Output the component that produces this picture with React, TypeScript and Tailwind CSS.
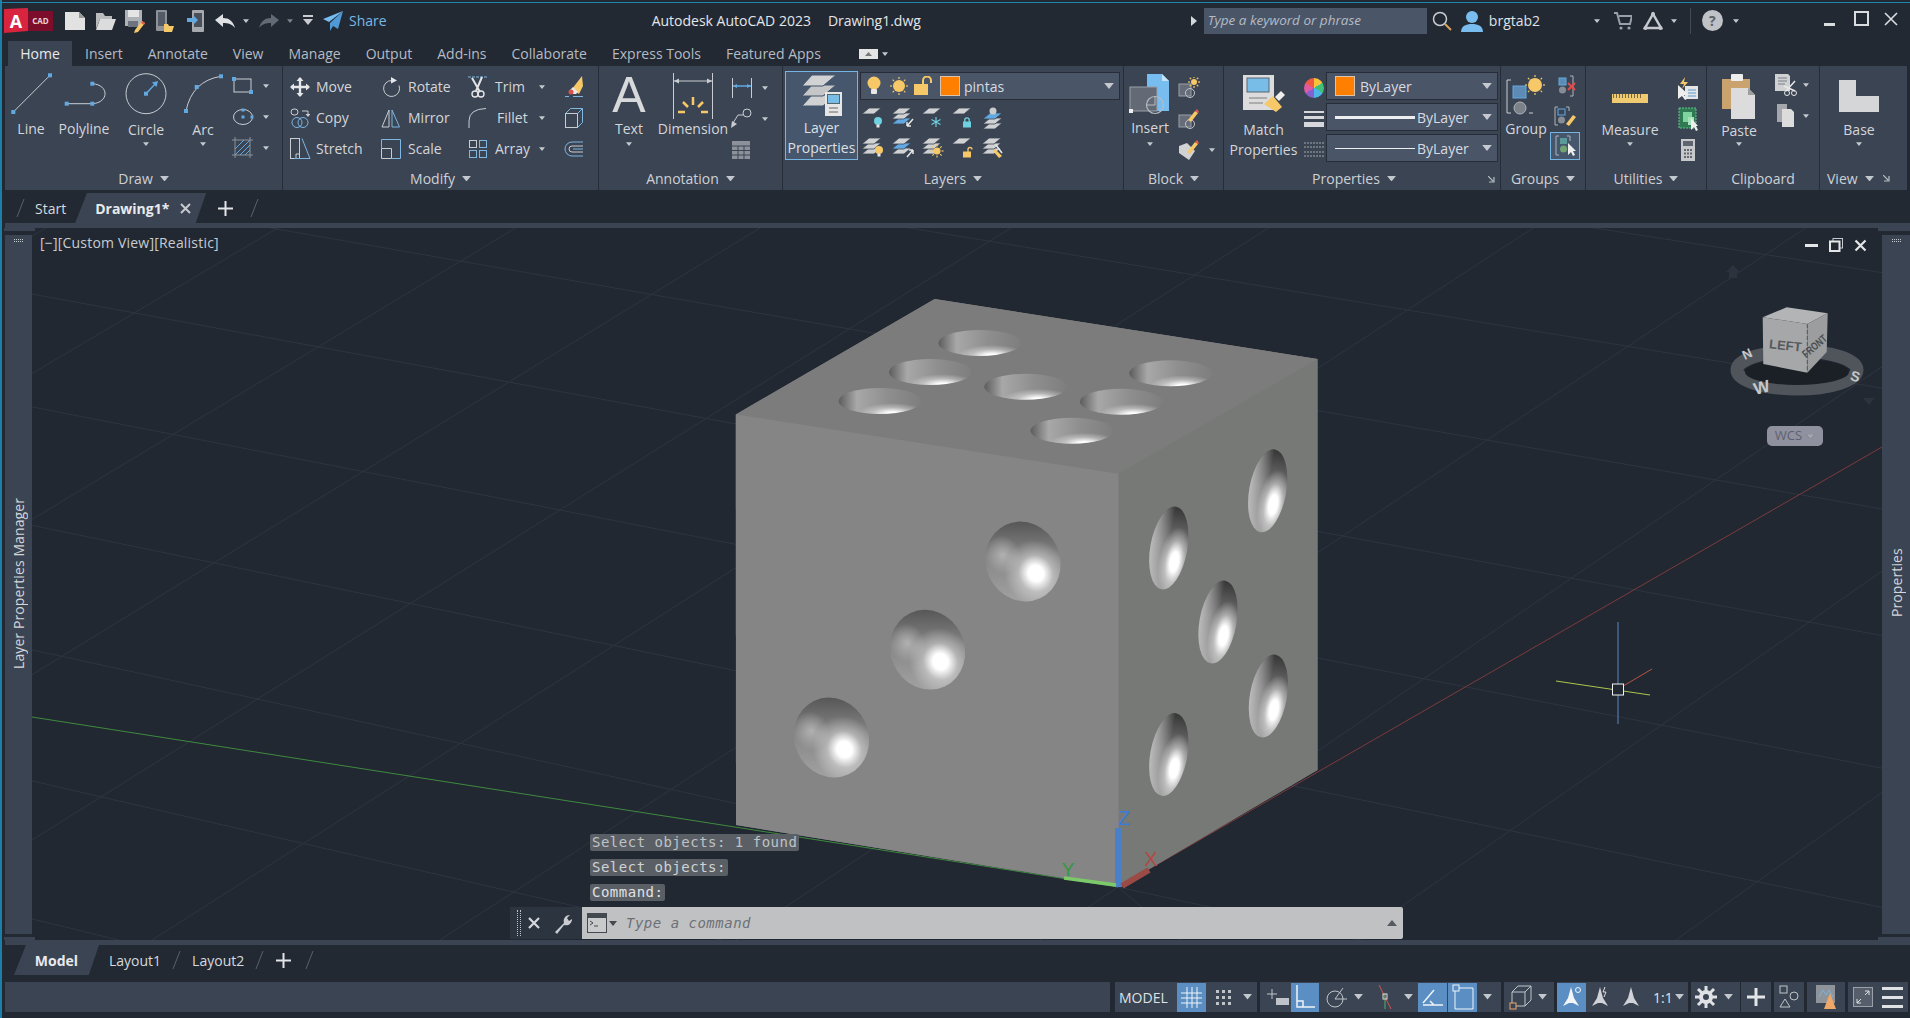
import type { ReactNode } from "react";

const BLUE = "#62a9e2";
const GREY = "#c9cdd2";
const YEL = "#f6c868";

function Ico({ w = 20, h = 20, children, className = "" }: { w?: number; h?: number; children: ReactNode; className?: string }) {
  return (
    <svg width={w} height={h} viewBox={`0 0 ${w} ${h}`} fill="none" className={`shrink-0 ${className}`}>
      {children}
    </svg>
  );
}

function Caret({ size = 8, color = "#c3c8ce" }: { size?: number; color?: string }) {
  return (
    <svg width={size} height={size / 2 + 1} viewBox="0 0 8 5" className="shrink-0">
      <path d="M0 0h8L4 5z" fill={color} />
    </svg>
  );
}

function Pt({ x, y, s = 4 }: { x: number; y: number; s?: number }) {
  return <rect x={x - s / 2} y={y - s / 2} width={s} height={s} fill={BLUE} />;
}

/* ---------- title bar ---------- */

function Logo() {
  return (
    <div className="flex h-[23px] items-center">
      <div className="flex h-[25px] w-[24px] items-center justify-center bg-[#d8243f] text-[18px] font-bold leading-none text-white [clip-path:polygon(0_4%,100%_0,100%_92%,0_100%)]">
        A
      </div>
      <div className="flex h-[20px] w-[25px] items-center justify-center bg-[#7c0d2b] text-[8px] font-bold text-[#e9d4da]">
        CAD
      </div>
    </div>
  );
}

const QatNew = () => (
  <Ico w={20} h={20}>
    <path d="M0 1h14l6 6v12H0z" fill="#e2e2e2" />
    <path d="M14 1v6h6z" fill="#9a9a9a" />
  </Ico>
);
const QatOpen = () => (
  <Ico w={21} h={20}>
    <path d="M1 5V2h7l2 3h7v3H5L1 18z" fill="#b9bbbd" />
    <path d="M5 8h16l-4 11H1z" fill="#dcdcdc" />
  </Ico>
);
const QatSave = () => (
  <Ico w={20} h={24}>
    <path d="M0 1h17v16H0z" fill="#aeb1b5" />
    <rect x="3" y="1" width="11" height="7" fill="#e5e5e5" />
    <rect x="3" y="12" width="10" height="6" fill="#6d7480" />
    <path d="M10 21l7-9 3 2-7 9-4 1z" fill={YEL} />
    <path d="M17 12l3 2-1 2-3-2z" fill="#e25a4a" />
  </Ico>
);
const QatPhoneOpen = () => (
  <Ico w={19} h={24}>
    <rect x="1" y="1" width="11" height="21" rx="1" fill="#8e9298" />
    <rect x="3" y="3" width="7" height="14" fill="#545b66" />
    <path d="M9 15h4l1 2h5l-2 6H9z" fill={YEL} />
  </Ico>
);
const QatPhoneSave = () => (
  <Ico w={18} h={24}>
    <rect x="5" y="1" width="12" height="22" rx="1" fill="#a6a9ad" />
    <rect x="7" y="4" width="8" height="14" fill="#4a505a" />
    <path d="M0 9h6V6l5 5-5 5v-3H0z" fill={BLUE} />
  </Ico>
);
const UndoIco = ({ color }: { color: string }) => (
  <Ico w={20} h={16}>
    <path d="M0 7l8-6v4c6 0 10 3 12 10-3-4-7-5-12-5v4z" fill={color} />
  </Ico>
);
const RedoIco = ({ color }: { color: string }) => (
  <Ico w={20} h={16}>
    <path d="M20 7l-8-6v4C6 5 2 8 0 15c3-4 7-5 12-5v4z" fill={color} />
  </Ico>
);
const QatMenu = () => (
  <Ico w={10} h={11}>
    <rect y="0" width="10" height="2" fill="#c8ccd1" />
    <path d="M0 4h10L5 10z" fill="#c8ccd1" />
  </Ico>
);
const Plane = () => (
  <Ico w={20} h={20}>
    <path d="M20 0L0 8l6 3z" fill="#79bdf0" />
    <path d="M20 0L7 12v8l3-5 5 3z" fill="#4f9ad6" />
  </Ico>
);

function TitleBar() {
  return (
    <div className="flex h-[38px] items-center pb-[3px] pl-[2px]">
      <Logo />
      <div className="ml-[12px] flex w-[30px] justify-start"><QatNew /></div>
      <div className="flex w-[30px]"><QatOpen /></div>
      <div className="flex w-[30px]"><QatSave /></div>
      <div className="flex w-[32px]"><QatPhoneOpen /></div>
      <div className="flex w-[28px]"><QatPhoneSave /></div>
      <UndoIco color="#dfe1e4" />
      <div className="ml-[8px]"><Caret size={6} /></div>
      <div className="ml-[10px]"><RedoIco color="#626a76" /></div>
      <div className="ml-[8px]"><Caret size={6} color="#7b838e" /></div>
      <div className="ml-[10px]"><QatMenu /></div>
      <div className="ml-[10px]"><Plane /></div>
      <span className="ml-[6px] text-[14px] text-[#79b8e6]">Share</span>
      <span className="ml-[265px] text-[14px] text-[#e3e6ea]">Autodesk AutoCAD 2023</span>
      <span className="ml-[17px] text-[14px] text-[#e3e6ea]">Drawing1.dwg</span>
      <svg width="6" height="10" viewBox="0 0 6 10" className="ml-[270px] shrink-0"><path d="M0 0l6 5-6 5z" fill="#d5d8dc" /></svg>
      <div className="ml-[7px] flex h-[26px] w-[223px] items-center bg-[#4a5567] pl-[4px] text-[13.5px] italic text-[#b4bbc5]">
        Type a keyword or phrase
      </div>
      <Ico w={20} h={20} className="ml-[5px]">
        <circle cx="8" cy="8" r="6.5" stroke="#c9cdd2" strokeWidth="1.5" />
        <path d="M13 13l6 6" stroke="#d9a45a" strokeWidth="2" />
      </Ico>
      <Ico w={22} h={22} className="ml-[9px]">
        <circle cx="11" cy="7" r="6" fill="#79bdf0" />
        <path d="M0 22c0-6 5-8 11-8s11 2 11 8z" fill="#79bdf0" />
      </Ico>
      <span className="ml-[6px] w-[105px] text-[14px] text-[#dfe2e6]">brgtab2</span>
      <Caret size={6} />
      <Ico w={18} h={20} className="ml-[14px]">
        <path d="M0 2h3l3 11h10l2-8H5" stroke="#9aa0a8" strokeWidth="2" />
        <circle cx="7" cy="17" r="1.6" fill="#9aa0a8" />
        <circle cx="15" cy="17" r="1.6" fill="#9aa0a8" />
      </Ico>
      <Ico w={20} h={20} className="ml-[11px]">
        <path d="M10 3L2 17h16z" stroke="#c5c9ce" strokeWidth="2.5" />
        <circle cx="10" cy="3" r="2" fill="#c5c9ce" />
        <circle cx="2.5" cy="17" r="2" fill="#c5c9ce" />
        <circle cx="17.5" cy="17" r="2" fill="#c5c9ce" />
      </Ico>
      <div className="ml-[8px]"><Caret size={6} /></div>
      <div className="ml-[13px] h-[26px] w-px bg-[#414a58]" />
      <div className="ml-[11px] flex h-[21px] w-[21px] items-center justify-center rounded-full bg-[#bfc2c6] text-[14px] font-bold text-[#5c6068]">?</div>
      <div className="ml-[10px]"><Caret size={6} /></div>
      <div className="ml-[85px] mt-[8px] h-[3px] w-[11px] bg-[#dadde0]" />
      <div className="ml-[19px] mb-[4px] h-[15px] w-[15px] border-2 border-[#dadde0]" />
      <Ico w={14} h={14} className="ml-[15px] mb-[4px]">
        <path d="M1 1l12 12M13 1L1 13" stroke="#dadde0" strokeWidth="1.6" />
      </Ico>
    </div>
  );
}

function MenuTabs() {
  const tabs = ["Insert", "Annotate", "View", "Manage", "Output", "Add-ins", "Collaborate", "Express Tools", "Featured Apps"];
  return (
    <div className="flex h-[25px] items-stretch pl-[6px] text-[14px]">
      <div className="flex w-[64px] items-center justify-center bg-[#3b4453] text-[#e8eaed]">Home</div>
      <div className="flex items-center gap-[25px] pl-[13px] text-[#b5bbc4]">
        {tabs.map((t) => (
          <span key={t}>{t}</span>
        ))}
      </div>
      <div className="ml-[38px] flex items-center">
        <div className="flex h-[10px] w-[19px] items-center justify-center bg-[#e4e4e4]">
          <svg width="7" height="4" viewBox="0 0 7 4"><path d="M3.5 0L7 4H0z" fill="#777" /></svg>
        </div>
        <div className="ml-[4px]"><Caret size={6} /></div>
      </div>
    </div>
  );
}

/* ---------- ribbon helpers ---------- */

function Panel({ className, title, launcher, noCaret, children }: { className: string; title: string; launcher?: boolean; noCaret?: boolean; children: ReactNode }) {
  return (
    <div className={`flex shrink-0 flex-col border-r border-[#262d38] bg-[#3b4453] ${className}`}>
      <div className="flex h-[104px]">{children}</div>
      <div className={`relative flex h-[20px] items-center justify-center gap-[7px] pb-[3px] text-[14px] text-[#cdd1d6] ${launcher ? "pr-[16px]" : ""}`}>
        <span>{title}</span>
        {!noCaret && <Caret size={9} />}
        {launcher && (
          <svg width="7" height="7" viewBox="0 0 7 7" className="absolute right-[5px] top-[6px]">
            <path d="M0 0l5 5M6 1v5H1" stroke="#b8bdc4" strokeWidth="1.2" fill="none" />
          </svg>
        )}
      </div>
    </div>
  );
}

function Large({ className, icon, label, caret, iconH = 47 }: { className: string; icon: ReactNode; label: ReactNode; caret?: boolean; iconH?: number }) {
  return (
    <div className={`flex shrink-0 flex-col items-center pt-[6px] ${className}`}>
      <div className="flex items-center justify-center" style={{ height: iconH }}>{icon}</div>
      <div className="text-center text-[14px] leading-[20px] whitespace-nowrap text-[#d3d6db]">{label}</div>
      {caret && <div className="mt-[3px]"><Caret size={6} /></div>}
    </div>
  );
}

function Row({ icon, label, className = "", caret, labelClass = "ml-[3px]" }: { icon: ReactNode; label?: string; className?: string; caret?: boolean; labelClass?: string }) {
  return (
    <div className={`flex h-[31px] items-center ${className}`}>
      <div className="flex w-[26px] justify-center">{icon}</div>
      {label && <span className={`text-[14px] text-[#d3d6db] ${labelClass}`}>{label}</span>}
      {caret && <div className="ml-auto"><Caret size={6} /></div>}
    </div>
  );
}

function Combo({ className = "", children }: { className?: string; children: ReactNode }) {
  return (
    <div className={`flex h-[28px] items-center border border-[#262d38] bg-[#4a5568] pr-[5px] text-[14px] text-[#d8dbe0] ${className}`}>
      {children}
      <div className="ml-auto"><Caret size={10} color="#c6cad0" /></div>
    </div>
  );
}

const Swatch = () => <div className="h-[20px] w-[20px] shrink-0 border border-[#d9c3ae] bg-[#ff8000]" />;

const Sheet = ({ y = 0, x = 0, fill = "#cfd1d3" }: { y?: number; x?: number; fill?: string }) => (
  <path d={`M${x + 7} ${y}h12l-7 6H${x}z`} fill={fill} stroke="#3b4453" strokeWidth="0.8" />
);
const Bulb = ({ x = 0, y = 0, c = YEL }: { x?: number; y?: number; c?: string }) => (
  <g transform={`translate(${x} ${y})`}>
    <circle cx="4" cy="4" r="4" fill={c} />
    <rect x="2.5" y="7.5" width="3" height="3" fill="#e5e5e5" />
  </g>
);
const Lock = ({ x = 0, y = 0, c = YEL, open }: { x?: number; y?: number; c?: string; open?: boolean }) => (
  <g transform={`translate(${x} ${y})`}>
    <rect x="0" y="4.5" width="8" height="6" fill={c} />
    <path d={open ? "M5 5V2.5a2 2 0 0 1 4 0" : "M1.8 5V3a2.2 2.2 0 0 1 4.4 0v2"} stroke={c} strokeWidth="1.3" fill="none" />
  </g>
);
const Stack = ({ mid = "#cfd1d3" }: { mid?: string }) => (
  <>
    <Sheet y={11} />
    <Sheet y={6} fill={mid} />
    <Sheet y={1} />
  </>
);
const Sun = ({ cx, cy, r = 5 }: { cx: number; cy: number; r?: number }) => (
  <g>
    <circle cx={cx} cy={cy} r={r} fill={YEL} />
    {[0, 45, 90, 135, 180, 225, 270, 315].map((a) => (
      <rect key={a} x={cx - 0.6} y={cy - r - 3} width="1.2" height="2" fill={YEL} transform={`rotate(${a} ${cx} ${cy})`} />
    ))}
  </g>
);

/* ---------- ribbon panels ---------- */

function DrawPanel() {
  return (
    <Panel className="w-[278px]" title="Draw">
      <Large className="w-[52px]" label="Line" icon={
        <Ico w={46} h={47}>
          <path d="M5.3 40L42 3.3" stroke={GREY} />
          <Pt x={5.3} y={40} /><Pt x={42} y={3.3} />
        </Ico>
      } />
      <Large className="w-[54px]" label="Polyline" icon={
        <Ico w={46} h={47}>
          <path d="M5.7 31.7h25.6c17-1 17-19 0-20" stroke={GREY} />
          <Pt x={5.7} y={31.7} /><Pt x={31.3} y={31.7} /><Pt x={31.3} y={11.7} />
        </Ico>
      } />
      <Large className="w-[70px]" label={<span className="relative top-px">Circle</span>} caret icon={
        <Ico w={46} h={47}>
          <circle cx="23" cy="21.7" r="20" stroke={GREY} />
          <path d="M23 21.7L33 11" stroke={BLUE} strokeWidth="1.4" />
          <path d="M35 9l-6 1.5 4.5 4.5z" fill={BLUE} />
          <Pt x={23} y={21.7} />
        </Ico>
      } />
      <Large className="w-[44px]" label={<span className="relative top-px">Arc</span>} caret icon={
        <Ico w={46} h={47}>
          <path d="M6 39Q12 9 41 4.3" stroke={GREY} />
          <Pt x={6} y={39} /><Pt x={16.7} y={15} /><Pt x={41} y={4.3} />
        </Ico>
      } />
      <div className="flex w-[50px] flex-col pt-[4px]">
        <div className="flex h-[31px] items-center pl-[7px]">
          <Ico w={22} h={18}>
            <rect x="2" y="2" width="17" height="13" stroke={GREY} />
            <Pt x={2} y={2} /><Pt x={19} y={15} />
          </Ico>
          <div className="ml-[9px]"><Caret size={6} /></div>
        </div>
        <div className="flex h-[31px] items-center pl-[7px]">
          <Ico w={22} h={18}>
            <ellipse cx="11" cy="9" rx="9.5" ry="7.5" stroke={GREY} />
            <Pt x={11} y={9} s={3} /><Pt x={11} y={2} s={3} /><Pt x={20} y={9} s={3} />
          </Ico>
          <div className="ml-[9px]"><Caret size={6} /></div>
        </div>
        <div className="flex h-[31px] items-center pl-[7px]">
          <Ico w={22} h={22}>
            <path d="M3 0v21M18 0v21M0 3h21M0 18h21" stroke="#8b919a" />
            <path d="M3 12l9-9M3 18L18 3M8 18l10-10M13 18l5-5" stroke={BLUE} />
          </Ico>
          <div className="ml-[9px]"><Caret size={6} /></div>
        </div>
      </div>
    </Panel>
  );
}

function ModifyPanel() {
  const sb = "#7fb7e3";
  return (
    <Panel className="w-[316px]" title="Modify">
      <div className="flex pl-[4px] pt-[5px]">
        <div className="w-[91px]">
          <Row label="Move" icon={
            <Ico>
              <path d="M10 1v18M1 10h18" stroke="#e6e7e9" strokeWidth="2.4" />
              <path d="M10 0l3.5 4h-7zM10 20l3.5-4h-7zM0 10l4-3.5v7zM20 10l-4-3.5v7z" fill="#e6e7e9" />
            </Ico>
          } />
          <Row label="Copy" icon={
            <Ico>
              <rect x="1" y="1" width="7" height="6" rx="3" stroke={GREY} />
              <path d="M12 3h6v4" stroke={GREY} />
              <path d="M15.5 6h5l-2.5 3z" fill={GREY} />
              <circle cx="7" cy="14.5" r="5" stroke={sb} />
              <circle cx="13" cy="14.5" r="5" stroke={sb} />
            </Ico>
          } />
          <Row label="Stretch" icon={
            <Ico w={26} h={24}>
              <rect x="3.5" y="1.5" width="9" height="20" stroke={GREY} />
              <path d="M15 1.5L23 21.5H7" stroke={sb} />
              <path d="M9 17v4M9 17h4" stroke={GREY} />
            </Ico>
          } />
        </div>
        <div className="w-[87px]">
          <Row labelClass="ml-[4px]" label="Rotate" icon={
            <Ico>
              <path d="M11 3.5a8 8 0 1 0 7 5" stroke={GREY} />
              <path d="M10 0l6 3.5-6 3z" fill="#e5e6e8" />
            </Ico>
          } />
          <Row labelClass="ml-[4px]" label="Mirror" icon={
            <Ico w={22} h={20}>
              <path d="M9 2L2 19h7z" stroke={GREY} />
              <path d="M12 2l7.5 17H12z" stroke={sb} />
            </Ico>
          } />
          <Row labelClass="ml-[4px]" label="Scale" icon={
            <Ico>
              <path d="M.5 9.5h10v10H.5z" stroke={GREY} />
              <path d="M.5 9V.5h19v19H11" stroke={sb} />
            </Ico>
          } />
        </div>
        <div className="w-[92px] pr-[12px]">
          <Row caret labelClass="ml-[4px]" label="Trim" icon={
            <Ico w={20} h={24}>
              <path d="M0 2h20" stroke={sb} strokeDasharray="3 1" />
              <path d="M4 3l8 14M14 2L8 16" stroke="#e3e4e6" strokeWidth="2" />
              <circle cx="7" cy="19" r="3" stroke="#e3e4e6" strokeWidth="1.4" />
              <circle cx="13" cy="19" r="3" stroke="#e3e4e6" strokeWidth="1.4" />
            </Ico>
          } />
          <Row caret labelClass="ml-[6px]" label="Fillet" icon={
            <Ico w={22} h={22}>
              <path d="M2 21V14Q2 2 19 1.5" stroke={GREY} />
            </Ico>
          } />
          <Row caret labelClass="ml-[4px]" label="Array" icon={
            <Ico w={20} h={20}>
              <rect x="1.5" y="1.5" width="7" height="7" stroke={GREY} />
              <rect x="11.5" y="1.5" width="7" height="7" stroke={sb} />
              <rect x="1.5" y="11.5" width="7" height="7" stroke={sb} />
              <rect x="11.5" y="11.5" width="7" height="7" stroke={sb} />
            </Ico>
          } />
        </div>
        <div className="ml-[4px] w-[26px]">
          <Row icon={
            <Ico w={20} h={24}>
              <path d="M8 14L18 1l1 10-4 8z" fill={YEL} />
              <path d="M5 16l4-4 5 5-2 2H7z" fill="#e8e8e8" />
              <circle cx="7" cy="17" r="2.5" fill="#dd5148" />
              <path d="M1 21.5h4M9 21.5h10" stroke={sb} />
            </Ico>
          } />
          <Row icon={
            <Ico w={20} h={22}>
              <rect x="1.5" y="6.5" width="12" height="14" stroke={GREY} />
              <path d="M1.5 6.5l5-5h12v14l-5 5M13.5 6.5l5-5" stroke={sb} />
            </Ico>
          } />
          <Row icon={
            <Ico w={20} h={18}>
              <path d="M19 2H8a7 7 0 0 0 0 14h11" stroke={sb} />
              <path d="M19 6H8a3 3 0 0 0 0 6h11" stroke={GREY} />
              <path d="M19 9H9" stroke={sb} />
            </Ico>
          } />
        </div>
      </div>
    </Panel>
  );
}

function AnnotationPanel() {
  return (
    <Panel className="w-[184px]" title="Annotation">
      <div className="w-[60px]">
        <Large className="w-full" label="Text" caret icon={
          <span className="text-[50px] leading-[47px] text-[#d8d9db] [font-family:'Liberation_Sans',sans-serif]">A</span>
        } />
      </div>
      <Large className="w-[68px]" label="Dimension" icon={
        <Ico w={44} h={47}>
          <path d="M2.5 1v46M41.5 1v46" stroke={GREY} />
          <path d="M3 9h38" stroke={GREY} />
          <path d="M3 9l5-2.5v5zM41 9l-5-2.5v5z" fill={GREY} />
          <path d="M22 25v8M12 30l5 5M32 30l-5 5M7 40h7M30 40h7" stroke={YEL} strokeWidth="2.5" />
        </Ico>
      } />
      <div className="ml-[4px] flex w-[50px] flex-col pt-[6px]">
        <div className="flex h-[31px] items-center">
          <Ico w={22} h={22}>
            <path d="M1.5 1v20M20.5 1v20" stroke={GREY} />
            <path d="M2 9h18" stroke={BLUE} strokeWidth="1.5" />
            <path d="M2 9l4-2v4zM20 9l-4-2v4z" fill={BLUE} />
          </Ico>
          <div className="ml-[9px]"><Caret size={6} /></div>
        </div>
        <div className="flex h-[31px] items-center">
          <Ico w={22} h={22}>
            <circle cx="16" cy="5" r="4" stroke={GREY} />
            <path d="M12 7H7L2 15" stroke={GREY} />
            <path d="M0 20l1-7 5 3z" fill={GREY} />
          </Ico>
          <div className="ml-[9px]"><Caret size={6} /></div>
        </div>
        <div className="flex h-[31px] items-center">
          <Ico w={20} h={20}>
            <rect x="1" y="1" width="18" height="18" fill="#8d929a" />
            <path d="M1 6h18M1 10.5h18M1 15h18M7 6v13M13 6v13" stroke="#3b4453" />
          </Ico>
        </div>
      </div>
    </Panel>
  );
}

function LayersPanel() {
  const top = [
    <Ico key="a" w={22} h={22}><Sheet x={0} y={1} /><Bulb x={12} y={10} c="#6fd0e0" /></Ico>,
    <Ico key="b" w={22} h={22}><Sheet x={0} y={11} fill={BLUE} /><Sheet x={0} y={6} /><Sheet x={0} y={1} /><path d="M21 12l-6 7M15 19h4M15 19v-4" stroke="#e8e8e8" strokeWidth="1.5" /></Ico>,
    <Ico key="c" w={22} h={22}><Sheet x={0} y={1} /><path d="M14 10v10M9.5 12.5l9 5M18.5 12.5l-9 5" stroke="#6fd0e0" strokeWidth="1.2" /></Ico>,
    <Ico key="d" w={22} h={22}><Sheet x={0} y={1} /><Lock x={11} y={10} c="#6fd0e0" /></Ico>,
    <Ico key="e" w={22} h={22}><Sheet x={1} y={16} /><Sheet x={1} y={11} /><Sheet x={1} y={6} fill={BLUE} /><circle cx="11" cy="4" r="3.5" fill="#c9cbcd" /></Ico>,
  ];
  const bottom = [
    <Ico key="a" w={22} h={22}><Stack /><Bulb x={13} y={9} /></Ico>,
    <Ico key="b" w={22} h={22}><Stack mid={BLUE} /><path d="M15 20l6-7M21 13h-4M21 13v4" stroke="#e8e8e8" strokeWidth="1.5" /></Ico>,
    <Ico key="c" w={22} h={22}><Stack /><Sun cx={15} cy={14} r={3.5} /></Ico>,
    <Ico key="d" w={22} h={22}><Sheet x={0} y={1} /><Lock x={11} y={10} open /></Ico>,
    <Ico key="e" w={22} h={22}><Stack /><path d="M13 12l7 7-3 2-6-7z" fill={YEL} /><path d="M14 8l6 8" stroke="#e8e8e8" strokeWidth="1.5" /></Ico>,
  ];
  return (
    <Panel className="w-[341px]" title="Layers">
      <div className="ml-[2px] mt-[5px] flex h-[89px] w-[73px] shrink-0 flex-col items-center border border-[#74b5e4] bg-[#45566d] pt-[3px]">
        <Ico w={40} h={44}>
          <path d="M10 20h24L21 31H0z" fill="#cfd1d3" stroke="#45566d" />
          <path d="M10 10h24L21 21H0z" fill="#c4c6c8" stroke="#45566d" />
          <path d="M10 0h24L21 11H0z" fill="#d0d2d4" stroke="#45566d" />
          <rect x="23" y="17" width="17" height="24" fill="#e6e6e6" />
          <rect x="25.5" y="19.5" width="12" height="9" fill="#78bce8" stroke="#566" />
          <path d="M27 33h9M27 37h9" stroke="#666" />
        </Ico>
        <div className="mt-[-1px] text-center text-[14px] leading-[20px] text-[#dde0e4]">Layer<br />Properties</div>
      </div>
      <div className="ml-[2px] mt-[6px] flex flex-col">
        <Combo className="w-[260px] pl-[6px]">
          <Ico w={14} h={20}>
            <circle cx="7" cy="7" r="6.5" fill={YEL} />
            <rect x="4" y="13" width="6" height="5" rx="1" fill="#e8e8e8" />
          </Ico>
          <Ico w={24} h={24} className="ml-[6px]"><Sun cx={12} cy={12} r={6} /></Ico>
          <Ico w={20} h={20} className="ml-[3px]">
            <rect x="0" y="8" width="14" height="11" fill={YEL} />
            <path d="M9 8V4.5a4 4 0 0 1 8 0V7" stroke={YEL} strokeWidth="2" />
          </Ico>
          <div className="ml-[6px]"><Swatch /></div>
          <span className="ml-[4px]">pintas</span>
        </Combo>
        <div className="mt-[3px] -ml-[2px] flex h-[30px] items-center">
          {top.map((ic, i) => (
            <div key={i} className="flex w-[30px] justify-center">{ic}</div>
          ))}
        </div>
        <div className="-ml-[2px] flex h-[30px] items-center">
          {bottom.map((ic, i) => (
            <div key={i} className="flex w-[30px] justify-center">{ic}</div>
          ))}
        </div>
      </div>
    </Panel>
  );
}

function BlockPanel() {
  return (
    <Panel className="w-[100px]" title="Block">
      <Large className="w-[52px]" label={<span className="relative -top-px">Insert</span>} caret iconH={47} icon={
        <Ico w={42} h={44}>
          <path d="M18 0h15l7 7v30H18z" fill="#78bdf0" />
          <path d="M33 0l7 7h-7z" fill="#c6e2f7" />
          <rect x="1" y="13" width="27" height="24" fill="#636a76" stroke="#9aa0a8" />
          <circle cx="26" cy="31" r="8.5" stroke="#b8bcc2" strokeWidth="1.2" />
          <path d="M26 22v9h-8" stroke="#b8bcc2" />
          <rect x="0" y="35" width="4" height="4" fill="#eee" />
        </Ico>
      } />
      <div className="flex w-[47px] flex-col pt-[6px]">
        <div className="flex h-[31px] items-center pl-[2px]">
          <Ico w={22} h={22}>
            <rect x="1" y="7" width="12" height="12" fill="#666d79" stroke="#9aa0a8" />
            <circle cx="12" cy="16" r="4.5" stroke="#c2c5ca" />
            <Sun cx={16} cy={5} r={3} />
          </Ico>
        </div>
        <div className="flex h-[31px] items-center pl-[2px]">
          <Ico w={22} h={22}>
            <rect x="1" y="7" width="12" height="12" fill="#666d79" stroke="#9aa0a8" />
            <circle cx="12" cy="16" r="4.5" stroke="#c2c5ca" />
            <path d="M10 12l7-9 3 2-7 9z" fill={YEL} />
            <path d="M17 3l2-2 2 3-1 1z" fill="#e25a4a" />
          </Ico>
        </div>
        <div className="flex h-[31px] items-center pl-[2px]">
          <Ico w={22} h={22}>
            <path d="M1 7l8-3 8 8-6 9-10-7z" fill="#d0d2d4" />
            <path d="M9 13l8-10 3 2-8 10z" fill={YEL} />
            <path d="M17 3l2-2 2 3-1 1z" fill="#e25a4a" />
          </Ico>
          <div className="ml-[9px]"><Caret size={6} /></div>
        </div>
      </div>
    </Panel>
  );
}

function PropertiesPanel() {
  return (
    <Panel className="w-[277px]" title="Properties" launcher>
      <Large className="w-[79px]" label={<>Match<br />Properties</>} iconH={48} icon={
        <Ico w={42} h={42}>
          <rect x="0" y="0" width="31" height="35" fill="#dcdcdc" />
          <rect x="4" y="3" width="22" height="14" fill="#78bce8" stroke="#5a6470" />
          <path d="M6 23h18M6 28h14" stroke="#7c7c7c" />
          <path d="M21 29l9-8 9 11-6 5z" fill={YEL} />
          <path d="M32 22l6-6 4 4-6 6z" fill="#eee" />
        </Ico>
      } />
      <div className="flex w-[22px] flex-col items-center pt-[6px]">
        <div className="flex h-[31px] items-center">
          <div className="h-[20px] w-[20px] rounded-full bg-[conic-gradient(#f9c23c_0_16%,#3fbf78_16%_33%,#4fb7e8_33%_50%,#8660d0_50%_66%,#e05aa0_66%_83%,#ef5a43_83%)]" />
        </div>
        <div className="flex h-[31px] flex-col justify-center gap-[3px]">
          <div className="h-[2px] w-[20px] bg-[#d5d7da]" />
          <div className="h-[3px] w-[20px] bg-[#d5d7da]" />
          <div className="h-[5px] w-[20px] bg-[#d5d7da]" />
        </div>
        <Ico w={20} h={31}>
          <path d="M0 9h20M0 13h20M0 18h20M0 22h20" stroke="#a3a8af" strokeDasharray="2 1" />
        </Ico>
      </div>
      <div className="ml-[1px] flex w-[172px] flex-col gap-[3px] pt-[6px]">
        <Combo className="pl-[8px]">
          <Swatch />
          <span className="ml-[5px]">ByLayer</span>
        </Combo>
        <Combo className="pl-[8px]">
          <div className="h-[3px] w-[80px] bg-[#eceef0]" />
          <span className="ml-[2px]">ByLayer</span>
        </Combo>
        <Combo className="pl-[8px]">
          <div className="h-px w-[80px] bg-[#eceef0]" />
          <span className="ml-[2px]">ByLayer</span>
        </Combo>
      </div>
    </Panel>
  );
}

function GroupsPanel() {
  return (
    <Panel className="w-[85px]" title="Groups">
      <Large className="ml-[2px] w-[46px]" label="Group" iconH={47} icon={
        <Ico w={40} h={44}>
          <path d="M5 6H1v33h4M24 6h3M27 39h-4" stroke="#c9cdd2" />
          <rect x="7" y="12" width="13" height="12" fill="#5c8bb5" stroke={BLUE} />
          <circle cx="14" cy="34" r="6" fill="#7b8089" stroke="#b0b4ba" />
          <Sun cx={29} cy={11} r={7} />
        </Ico>
      } />
      <div className="ml-[1px] flex w-[30px] flex-col items-center pt-[5px]">
        <div className="flex h-[30px] items-center">
          <Ico w={22} h={22}>
            <path d="M16 1h3v20h-3" stroke="#aeb3b9" />
            <rect x="5" y="3" width="7" height="7" fill="#5c8bb5" stroke={BLUE} />
            <circle cx="8.5" cy="15" r="3.5" fill="#888d95" />
            <path d="M14 8l7 7M21 8l-7 7" stroke="#e14b4b" strokeWidth="2" />
          </Ico>
        </div>
        <div className="flex h-[31px] items-center">
          <Ico w={22} h={22}>
            <path d="M4 1H1v18h3M12 1h3v4" stroke="#aeb3b9" />
            <rect x="4" y="3" width="7" height="6" stroke={BLUE} />
            <circle cx="7.5" cy="14" r="3.5" fill="#888d95" />
            <path d="M12 18l7-9 3 2-7 9z" fill={YEL} />
          </Ico>
        </div>
        <div className="flex h-[28px] w-[30px] items-center justify-center border border-[#74b5e4] bg-[#45566d]">
          <Ico w={22} h={22}>
            <path d="M5 1H2v19h3M13 1h3v5" stroke="#aeb3b9" />
            <rect x="6" y="3" width="7" height="6" fill="#5c9a9a" />
            <circle cx="9.5" cy="14" r="3.5" fill="#72a372" />
            <path d="M14 8v12l3-3 2 4 2-1-2-4h3z" fill="#eee" />
          </Ico>
        </div>
      </div>
    </Panel>
  );
}

function UtilitiesPanel() {
  return (
    <Panel className="w-[121px]" title="Utilities">
      <Large className="ml-[4px] w-[80px]" label={<span className="relative top-px">Measure</span>} caret icon={
        <div className="mt-[6px] flex h-[9px] w-[36px] items-start gap-[2px] bg-[#f0cb72] px-[1px]">
          {[0, 1, 2, 3, 4, 5, 6, 7, 8, 9].map((i) => (
            <div key={i} className="h-[4px] w-px bg-[#7a6a3a]" />
          ))}
        </div>
      } />
      <div className="ml-[3px] flex w-[30px] flex-col items-center pt-[6px]">
        <div className="flex h-[31px] items-center">
          <Ico w={22} h={24}>
            <path d="M8 1L3 8h4L5 13l6-7H7z" fill={YEL} />
            <rect x="8" y="10" width="13" height="13" fill="#e5e5e5" />
            <path d="M11 14h8M11 17h8M11 20h8" stroke="#5a98cf" />
            <path d="M1 9v14l4-3 3 4 2-1-3-4h5z" fill="#eee" />
          </Ico>
        </div>
        <div className="flex h-[31px] items-center">
          <Ico w={20} h={24}>
            <rect x="1" y="1" width="17" height="20" fill="#2f7a52" stroke="#5fc48a" strokeDasharray="2 1" />
            <path d="M5 5h9v10H5z" fill="#7ed49c" />
            <path d="M10 10h6v8h-6z" fill="#a6e3ba" />
            <path d="M13 11v12l3-3 2 4 2-1-2-4h2z" fill="#eee" />
          </Ico>
        </div>
        <div className="flex h-[31px] items-center">
          <Ico w={16} h={24}>
            <rect x="1" y="1" width="14" height="22" fill="#c6c8cb" />
            <rect x="3" y="3" width="10" height="5" fill="#5f656e" />
            <path d="M4 11h2v2H4zM7 11h2v2H7zM10 11h2v2h-2zM4 14.5h2v2H4zM7 14.5h2v2H7zM10 14.5h2v2h-2zM4 18h2v2H4zM7 18h2v2H7zM10 18h2v2h-2z" fill="#63686f" />
          </Ico>
        </div>
      </div>
    </Panel>
  );
}

function ClipboardPanel() {
  return (
    <Panel className="w-[113px]" title="Clipboard" noCaret>
      <Large className="ml-[10px] w-[44px]" label={<span className="relative top-[2px]">Paste</span>} caret iconH={47} icon={
        <Ico w={34} h={46}>
          <path d="M0 6h28v30H0z" fill="#c9a26e" />
          <rect x="9" y="1" width="12" height="7" rx="1" fill="#eee" />
          <path d="M9 15h17l7 7v24H9z" fill="#dcdcdc" />
          <path d="M26 15l7 7h-7z" fill="#9d9d9d" />
        </Ico>
      } />
      <div className="ml-[14px] flex w-[40px] flex-col pt-[3px]">
        <div className="flex h-[31px] items-center">
          <Ico w={22} h={24}>
            <path d="M0 1h13l2 2v15H0z" fill="#cfd1d3" />
            <path d="M3 5h9M3 8h9M3 11h7" stroke="#7a7f86" />
            <path d="M9 13l11 5M20 8L11 18" stroke="#e8e8e8" strokeWidth="1.5" />
            <circle cx="12" cy="20" r="2.5" stroke="#e8e8e8" />
            <circle cx="19" cy="20" r="2.5" stroke="#e8e8e8" />
          </Ico>
          <div className="ml-[6px]"><Caret size={6} /></div>
        </div>
        <div className="flex h-[31px] items-center pl-[2px]">
          <Ico w={20} h={24}>
            <path d="M0 0h10v18H0z" fill="#a4a7ab" />
            <path d="M5 5h9l3 3v15H5z" fill="#dcdcdc" />
          </Ico>
          <div className="ml-[6px]"><Caret size={6} /></div>
        </div>
      </div>
    </Panel>
  );
}

function ViewPanel() {
  return (
    <div className="flex w-[87px] shrink-0 flex-col bg-[#3b4453]">
      <Large className="ml-[1px] w-[76px]" label={<span className="relative top-px">Base</span>} caret icon={
        <Ico w={40} h={32}>
          <path d="M0 0h17v16h23v16H0z" fill="#d5d6d8" />
        </Ico>
      } />
      <div className="mt-auto flex h-[20px] items-center pb-[3px] pl-[7px] text-[14px] text-[#cdd1d6]">
        <span>View</span>
        <div className="ml-[7px]"><Caret size={9} /></div>
        <svg width="7" height="7" viewBox="0 0 7 7" className="ml-[9px]">
          <path d="M0 0l5 5M6 1v5H1" stroke="#b8bdc4" strokeWidth="1.2" fill="none" />
        </svg>
      </div>
    </div>
  );
}

/* ---------- tab strips ---------- */

const Slash = ({ color = "#59616d", h = 18 }: { color?: string; h?: number }) => (
  <svg width="9" height={h} viewBox={`0 0 9 ${h}`} className="shrink-0">
    <path d={`M1 ${h}L8 0`} stroke={color} />
  </svg>
);

const PlusIco = ({ s = 14, w = 2 }: { s?: number; w?: number }) => (
  <svg width={s} height={s} viewBox={`0 0 ${s} ${s}`} className="shrink-0">
    <path d={`M${s / 2} 0v${s}M0 ${s / 2}h${s}`} stroke="#e3e5e8" strokeWidth={w} />
  </svg>
);

function DocTabs() {
  return (
    <div className="flex h-[33px] items-end pl-[14px] text-[14px]">
      <div className="flex h-[30px] items-center">
        <Slash />
        <span className="ml-[10px] text-[#d6d9dd]">Start</span>
      </div>
      <div className="ml-[9px] flex h-[30px] w-[131px] items-center bg-[#3b4453] pl-[20px] [clip-path:polygon(9%_0,100%_0,92%_100%,0_100%)]">
        <span className="font-bold text-[#e8eaed]">Drawing1*</span>
        <svg width="11" height="11" viewBox="0 0 11 11" className="ml-[11px]">
          <path d="M1 1l9 9M10 1l-9 9" stroke="#c6c9ce" strokeWidth="2" />
        </svg>
      </div>
      <div className="ml-[12px] flex h-[30px] items-center">
        <PlusIco s={15} />
        <div className="ml-[17px]"><Slash /></div>
      </div>
    </div>
  );
}

function LayoutTabs() {
  return (
    <div className="flex h-[37px] items-start pl-[12px] text-[14px]">
      <div className="flex h-[30px] w-[85px] items-center justify-center bg-[#3b4453] font-bold text-[#e8eaed] [clip-path:polygon(14%_0,100%_0,88%_100%,0_100%)]">
        Model
      </div>
      <div className="flex h-[30px] items-center text-[#d6d9dd]">
        <span className="ml-[10px]">Layout1</span>
        <div className="ml-[11px]"><Slash /></div>
        <span className="ml-[11px]">Layout2</span>
        <div className="ml-[11px]"><Slash /></div>
        <div className="ml-[12px]"><PlusIco s={15} /></div>
        <div className="ml-[14px]"><Slash /></div>
      </div>
    </div>
  );
}

/* ---------- status bar ---------- */

function SBtn({ active, className = "w-[29px]", children }: { active?: boolean; className?: string; children: ReactNode }) {
  return (
    <div className={`flex h-[29px] shrink-0 items-center justify-center ${active ? "bg-[#5b8fc4]" : ""} ${className}`}>
      {children}
    </div>
  );
}

const Rocket = ({ c = "#cfd2d6" }: { c?: string }) => (
  <path d="M9 1l3 11 5 8-6-3H7l-6 3 5-8z" fill={c} />
);

function StatusBar() {
  const sc = "#bfc4ca";
  return (
    <div className="flex h-[30px] gap-[3px] pl-[3px]">
      <div className="w-[1105px] bg-[#3b4453]" />
      <div className="ml-[2px] flex w-[142px] items-center bg-[#3b4453] pl-[4px]">
        <span className="w-[58px] text-[14px] text-[#dfe2e5]">MODEL</span>
        <SBtn active>
          <Ico w={21} h={21}><path d="M6 0v21M11 0v21M16 0v21M0 6h21M0 11h21M0 16h21" stroke="#eef3f8" /></Ico>
        </SBtn>
        <SBtn className="ml-[2px] w-[29px]">
          <Ico w={16} h={16}><path d="M1 1h3v3H1zM7 1h3v3H7zM13 1h3v3h-3zM1 7h3v3H1zM7 7h3v3H7zM13 7h3v3h-3zM1 13h3v3H1zM7 13h3v3H7zM13 13h3v3h-3z" fill={sc} /></Ico>
        </SBtn>
        <div className="ml-[6px]"><Caret size={9} /></div>
      </div>
      <div className="flex w-[241px] items-center bg-[#3b4453] pl-[4px]">
        <SBtn className="w-[27px]">
          <Ico w={22} h={18}><path d="M5 1v10M0 6h10" stroke={sc} /><rect x="9" y="10" width="13" height="7" fill={sc} /></Ico>
        </SBtn>
        <SBtn active className="w-[28px]">
          <Ico w={22} h={24}><path d="M3 0v22h18M3 16h6v6" stroke="#eef3f8" strokeWidth="1.5" /></Ico>
        </SBtn>
        <SBtn className="ml-[4px] w-[27px]">
          <Ico w={22} h={22}><circle cx="9" cy="13" r="8" stroke={sc} /><path d="M9 13L17 2M9 13h12" stroke={sc} /></Ico>
        </SBtn>
        <div className="ml-[4px]"><Caret size={9} /></div>
        <SBtn className="ml-[7px] w-[29px]">
          <Ico w={18} h={26}><path d="M3 1l12 24" stroke="#d9534f" /><path d="M9 9v16" stroke="#4fb06a" /><rect x="7" y="10" width="4" height="5" stroke="#ddd" /></Ico>
        </SBtn>
        <div className="ml-[5px]"><Caret size={9} /></div>
        <SBtn active className="ml-[5px] w-[29px]">
          <Ico w={22} h={20}><path d="M1 16L12 3M1 18h20M8 14l4 4" stroke="#eef3f8" strokeWidth="1.5" /></Ico>
        </SBtn>
        <SBtn active className="ml-[1px] w-[29px]">
          <Ico w={22} h={26}><path d="M3 4h18v21H3z" stroke="#eef3f8" /><rect x="1" y="1" width="6" height="6" fill="#5b8fc4" stroke="#eef3f8" /></Ico>
        </SBtn>
        <div className="ml-[6px]"><Caret size={9} /></div>
      </div>
      <div className="flex w-[50px] items-center bg-[#3b4453] pl-[4px]">
        <SBtn className="w-[26px]">
          <Ico w={24} h={26}>
            <path d="M3 8h13v14H3zM3 8l6-6h13v14l-6 6M16 8l6-6" stroke={sc} />
            <rect x="1" y="19" width="6" height="6" stroke="#f0a868" fill="#3b4453" />
          </Ico>
        </SBtn>
        <div className="ml-[4px]"><Caret size={9} /></div>
      </div>
      <div className="flex w-[131px] items-center bg-[#3b4453]">
        <SBtn active>
          <Ico w={20} h={22}><Rocket c="#f3f5f8" /><circle cx="16" cy="4" r="2.5" stroke="#f3f5f8" /></Ico>
        </SBtn>
        <SBtn className="w-[30px]">
          <Ico w={20} h={22}><Rocket /><path d="M14 1l-2 5h3l-2 5" stroke="#dfe2e5" /></Ico>
        </SBtn>
        <SBtn className="w-[30px]">
          <Ico w={18} h={22}><Rocket /></Ico>
        </SBtn>
        <span className="ml-[7px] text-[14px] text-[#dfe2e5]">1:1</span>
        <div className="ml-[2px]"><Caret size={9} /></div>
      </div>
      <div className="flex w-[49px] items-center bg-[#3b4453] pl-[4px]">
        <Ico w={22} h={22}>
          <circle cx="11" cy="11" r="5" stroke="#dfe2e5" strokeWidth="4" />
          <path d="M11 0v5M11 17v5M0 11h5M17 11h5M3 3l3.5 3.5M15.5 15.5L19 19M3 19l3.5-3.5M15.5 6.5L19 3" stroke="#dfe2e5" strokeWidth="3" />
        </Ico>
        <div className="ml-[7px]"><Caret size={9} /></div>
      </div>
      <div className="-ml-[2px] flex w-[30px] items-center justify-center bg-[#3b4453]"><PlusIco s={18} w={3} /></div>
      <div className="flex w-[30px] items-center justify-center bg-[#3b4453]">
        <Ico w={20} h={24}>
          <rect x="1" y="1" width="7" height="7" stroke={sc} />
          <circle cx="15" cy="11" r="4" stroke={sc} />
          <path d="M6 14l5 8H1z" stroke={sc} />
        </Ico>
      </div>
      <div className="flex w-[38px] items-center justify-center bg-[#3b4453]">
        <Ico w={20} h={24}>
          <rect x="0" y="0" width="19" height="18" fill="#8f949b" />
          <path d="M3 12l4-7 3 5 3-5 4 7" stroke="#7bb3e0" />
          <path d="M14 8l6 16H8z" fill="#f0a868" />
        </Ico>
      </div>
      <div className="flex w-[60px] items-center justify-center gap-[9px] bg-[#3b4453]">
        <Ico w={20} h={20}>
          <rect x="0.5" y="0.5" width="19" height="19" fill="#565e6b" stroke="#9aa0a8" />
          <path d="M4 16l4-4M4 12v4h4M16 4l-4 4M16 8V4h-4" stroke="#dfe2e5" />
        </Ico>
        <div className="flex flex-col gap-[6px]">
          <div className="h-[3px] w-[21px] bg-[#dfe2e5]" />
          <div className="h-[3px] w-[21px] bg-[#dfe2e5]" />
          <div className="h-[3px] w-[21px] bg-[#dfe2e5]" />
        </div>
      </div>
    </div>
  );
}

/* ---------- canvas ---------- */

// ground grid, projected from (u, v) cells onto the screen
function project(u: number, v: number) {
  const d = 1 + 0.012 * u + 0.02 * v;
  return [(1118 + 170 * u - 210 * v) / d, (887 - 96 * u - 33 * v) / d];
}

function Grid() {
  const lines: ReactNode[] = [];
  for (let i = -8; i <= 40; i++) {
    const [ax, ay] = project(i, -8);
    const [bx, by] = project(i, 45);
    const [cx, cy] = project(-8, i);
    const [dx, dy] = project(45, i);
    lines.push(<line key={`u${i}`} x1={ax} y1={ay} x2={bx} y2={by} stroke="#2d3540" strokeWidth="1" />);
    lines.push(<line key={`v${i}`} x1={cx} y1={cy} x2={dx} y2={dy} stroke="#2d3540" strokeWidth="1" />);
  }
  return <g>{lines}</g>;
}

const FRONT_PIPS = [
  [1023, 561.5],
  [927.6, 649.7],
  [831.5, 737.5],
];
const SIDE_PIPS = [
  [1267.7, 490.8],
  [1168.8, 548],
  [1218, 622],
  [1268.4, 696],
  [1168.8, 754.5],
];
const TOP_PIPS = [
  [979.8, 342.9],
  [930.4, 372],
  [880, 401],
  [1025.7, 386.8],
  [1170.8, 373.3],
  [1121.3, 401.8],
  [1071.9, 430.7],
];

function Dice() {
  return (
    <g>
      <defs>
        <linearGradient id="frontBase" x1="0.7" y1="0.03" x2="0.3" y2="0.97">
          <stop offset="0" stopColor="#565656" />
          <stop offset="0.45" stopColor="#868686" />
          <stop offset="1" stopColor="#a2a2a2" />
        </linearGradient>
        <radialGradient id="frontHot" cx="0.59" cy="0.7" r="0.42">
          <stop offset="0" stopColor="#fff" />
          <stop offset="0.24" stopColor="#fff" />
          <stop offset="0.55" stopColor="#fff" stopOpacity="0.35" />
          <stop offset="1" stopColor="#fff" stopOpacity="0" />
        </radialGradient>
        <radialGradient id="frontSoft" cx="0.29" cy="0.32" r="0.24">
          <stop offset="0" stopColor="#c0c0c0" stopOpacity="0.75" />
          <stop offset="1" stopColor="#c0c0c0" stopOpacity="0" />
        </radialGradient>
        <linearGradient id="sideBase" x1="0.5" y1="0" x2="0.5" y2="1">
          <stop offset="0" stopColor="#363636" />
          <stop offset="0.45" stopColor="#787878" />
          <stop offset="1" stopColor="#a0a0a0" />
        </linearGradient>
        <radialGradient id="sideHot" cx="0.71" cy="0.65" r="0.42">
          <stop offset="0" stopColor="#fff" />
          <stop offset="0.28" stopColor="#fff" />
          <stop offset="0.6" stopColor="#fff" stopOpacity="0.4" />
          <stop offset="1" stopColor="#fff" stopOpacity="0" />
        </radialGradient>
        <linearGradient id="sideEdge" x1="0" y1="0.5" x2="1" y2="0.5">
          <stop offset="0" stopColor="#d5d5d5" stopOpacity="0.7" />
          <stop offset="0.5" stopColor="#d5d5d5" stopOpacity="0" />
        </linearGradient>
        <linearGradient id="topBase" x1="0" y1="0.5" x2="1" y2="0.5">
          <stop offset="0" stopColor="#5c5c5c" />
          <stop offset="0.22" stopColor="#a8a8a8" />
          <stop offset="0.6" stopColor="#8e8e8e" />
          <stop offset="1" stopColor="#7e7e7e" />
        </linearGradient>
        <radialGradient id="topHot" cx="0.65" cy="1" r="0.42">
          <stop offset="0" stopColor="#fff" />
          <stop offset="0.18" stopColor="#fff" />
          <stop offset="0.6" stopColor="#fff" stopOpacity="0.35" />
          <stop offset="1" stopColor="#fff" stopOpacity="0" />
        </radialGradient>
      </defs>
      {/* silhouette first, so the faces leave no dark seam between them */}
      <polygon points="934.7,299 1317.5,359 1317.5,770 1118.6,887 736,825 735.8,414.4" fill="#7f7f7f" />
      <polygon points="934.7,299 1317.5,359 1118.6,473.8 735.8,414.4" fill="#7c7c7c" />
      <polygon points="735.8,414.4 1118.6,473.8 1118.6,887 736,825" fill="#858585" />
      <polygon points="1118.6,473.8 1317.5,359 1317.5,770 1118.6,887" fill="#767976" />
      {FRONT_PIPS.map(([x, y]) => (
        <g key={x} transform={`rotate(-25 ${x} ${y})`}>
          <ellipse cx={x} cy={y} rx="37" ry="40.5" fill="url(#frontBase)" />
          <ellipse cx={x} cy={y} rx="37" ry="40.5" fill="url(#frontSoft)" />
          <ellipse cx={x} cy={y} rx="37" ry="40.5" fill="url(#frontHot)" />
        </g>
      ))}
      {SIDE_PIPS.map(([x, y]) => (
        <g key={x} transform={`rotate(10 ${x} ${y})`}>
          <ellipse cx={x} cy={y} rx="18.5" ry="42" fill="url(#sideBase)" />
          <ellipse cx={x} cy={y} rx="18.5" ry="42" fill="url(#sideEdge)" />
          <ellipse cx={x} cy={y} rx="18.5" ry="42" fill="url(#sideHot)" />
        </g>
      ))}
      {TOP_PIPS.map(([x, y]) => (
        <g key={x}>
          <ellipse cx={x} cy={y} rx="41.5" ry="13" fill="url(#topBase)" />
          <ellipse cx={x} cy={y} rx="41.5" ry="13" fill="url(#topHot)" />
        </g>
      ))}
    </g>
  );
}

function ViewCube() {
  const font = "Liberation Sans, sans-serif";
  return (
    <g>
      <ellipse cx="1797" cy="370" rx="60" ry="19" fill="none" stroke="#50555c" strokeWidth="13" />
      <ellipse cx="1797" cy="372" rx="52" ry="13" fill="#1b2027" />
      <polygon points="1762.7,317.3 1786.7,307.3 1827.7,313.3 1807.3,324" fill="#b2b4b5" />
      <polygon points="1762.7,317.3 1807.3,324 1807.3,372.7 1763.3,364" fill="#a5a7a8" />
      <polygon points="1807.3,324 1827.7,313.3 1826.7,352 1807.3,372.7" fill="#9b9d9e" />
      <path d="M1807.3 324v48.7" stroke="#55585c" strokeDasharray="4 2" />
      <text x="1785" y="350" textAnchor="middle" fontSize="13" fontWeight="700" fill="#55585c" fontFamily={font} transform="rotate(6 1785 350)">LEFT</text>
      <text x="0" y="0" textAnchor="middle" fontSize="11" fontWeight="700" fill="#4a4d52" fontFamily={font} transform="translate(1817 349) rotate(-40) scale(0.75 1)">FRONT</text>
      <text x="0" y="0" textAnchor="middle" fontSize="13" fontWeight="700" fill="#c6c8ca" fontFamily={font} transform="translate(1749 358) rotate(-25)">N</text>
      <text x="0" y="0" textAnchor="middle" fontSize="17" fontWeight="700" fill="#c6c8ca" fontFamily={font} transform="translate(1763 393) rotate(-14)">W</text>
      <text x="0" y="0" textAnchor="middle" fontSize="14" fontWeight="700" fill="#c6c8ca" fontFamily={font} transform="translate(1854 381) rotate(16)">S</text>
      <path d="M1733 265l-7 7h3v6h8v-6h3z" fill="#2b333e" />
      <path d="M1863 398h12l-6 7z" fill="#2b333e" />
    </g>
  );
}

function Canvas() {
  return (
    <div className="relative h-full min-w-0 flex-1 overflow-hidden bg-[#212832]">
      <svg width="1850" height="712" viewBox="32 228 1850 712" className="absolute left-0 top-0">
        <Grid />
        <line x1="32" y1="717" x2="1118" y2="887" stroke="#3f8a3f" />
        <line x1="1118" y1="887" x2="1882" y2="447" stroke="#7d3b3b" />
        <line x1="1118" y1="887" x2="1180" y2="940" stroke="#2d3540" />
        <Dice />
        {/* UCS icon */}
        <rect x="1115" y="828" width="7" height="59" fill="#4a7fc9" />
        <line x1="1064" y1="878" x2="1116" y2="885" stroke="#7cc96a" strokeWidth="3.5" />
        <line x1="1122" y1="886" x2="1149" y2="870" stroke="#9b4a45" strokeWidth="6" />
        <text x="1124" y="825" textAnchor="middle" fontSize="20" fill="#3a7cd8" fontFamily="Liberation Sans, sans-serif">Z</text>
        <text x="1068" y="876" textAnchor="middle" fontSize="19" fill="#2f9a3c" fontFamily="Liberation Sans, sans-serif">Y</text>
        <text x="1151" y="866" textAnchor="middle" fontSize="20" fill="#b04a45" fontFamily="Liberation Sans, sans-serif">X</text>
        {/* crosshair */}
        <line x1="1618" y1="622" x2="1618" y2="724" stroke="#5a87c0" />
        <line x1="1556" y1="681" x2="1650" y2="695" stroke="#a8c84a" />
        <line x1="1618" y1="689" x2="1652" y2="669" stroke="#b5563f" />
        <rect x="1612.5" y="684" width="11" height="11" fill="#212832" stroke="#f2f2f2" />
        <ViewCube />
      </svg>

      <div className="absolute left-[8px] top-[4px] text-[14px] tracking-[0.2px] text-[#c8ccd1]">[−][Custom View][Realistic]</div>

      <div className="absolute right-[15px] top-[10px] flex items-center gap-[11px]">
        <div className="h-[3px] w-[13px] bg-[#e4e6e8]" />
        <Ico w={14} h={14}>
          <rect x="4" y="0.5" width="9.5" height="9.5" stroke="#c5c8cc" />
          <rect x="1" y="3.5" width="9.5" height="9.5" fill="#212832" stroke="#e4e6e8" strokeWidth="2" />
        </Ico>
        <Ico w={13} h={13}>
          <path d="M1.5 1.5l10 10M11.5 1.5l-10 10" stroke="#e4e6e8" strokeWidth="2.2" />
        </Ico>
      </div>

      <div className="absolute left-[1735px] top-[198px] flex h-[20px] w-[56px] items-center justify-center gap-[4px] rounded-[5px] bg-[#90919f] text-[13px] text-[#5e6070]">
        WCS
        <svg width="9" height="5" viewBox="0 0 9 5"><path d="M0 0h9L4.5 5z" fill="#a5a6b3" stroke="#777" strokeWidth="0.5" /></svg>
      </div>

      {/* command line */}
      <div className="absolute bottom-[1px] left-[478px] flex w-[893px] flex-col tracking-[0.5px] [font-family:'DejaVu_Sans_Mono',monospace]">
        <div className="ml-[80px] flex flex-col gap-[8px] text-[14px] leading-[17px]">
          <span className="w-fit rounded-[2px] bg-[#5a5f66] px-[2px] text-[#bfc2c5]">Select objects: 1 found</span>
          <span className="w-fit rounded-[2px] bg-[#5a5f66] px-[2px] text-[#cfd2d4]">Select objects:</span>
          <span className="w-fit rounded-[2px] bg-[#5a5f66] px-[2px] text-[#e0e2e4]">Command:</span>
        </div>
        <div className="mt-[6px] flex h-[32px]">
          <div className="flex w-[72px] items-center bg-[#2c3440] pl-[7px]">
            <div className="h-[26px] w-[4px] border-x border-dotted border-[#bfc3c8]" />
            <Ico w={14} h={14} className="ml-[6px]"><path d="M2 2l10 10M12 2L2 12" stroke="#d5d8dc" strokeWidth="2.2" /></Ico>
            <Ico w={22} h={22} className="ml-[11px]">
              <path d="M3 20l9-9a6 6 0 0 1 6-8l-3 3 2 3 3-2a6 6 0 0 1-8 6l-7 9z" fill="#c9ccd0" />
            </Ico>
          </div>
          <div className="flex flex-1 items-center rounded-r-[2px] bg-[#c0c1c3] pl-[5px] pr-[6px] text-[14px] italic text-[#6d7075]">
            <Ico w={20} h={20}>
              <rect x="0.5" y="0.5" width="19" height="19" fill="#c9cacc" stroke="#44494f" />
              <rect x="1" y="1" width="18" height="4" fill="#44494f" />
              <path d="M3 8l3 2-3 2M7 13h4" stroke="#44494f" />
            </Ico>
            <div className="ml-[2px] mr-[9px]"><Caret size={8} color="#44494f" /></div>
            Type a command
            <svg width="10" height="6" viewBox="0 0 10 6" className="ml-auto"><path d="M5 0l5 6H0z" fill="#55595f" /></svg>
          </div>
        </div>
      </div>
    </div>
  );
}

function SidePalette({ label, side }: { label: string; side: "left" | "right" }) {
  return (
    <div className={`relative z-10 flex h-full shrink-0 flex-col ${side === "left" ? "ml-[3px] w-[27px]" : "w-[28px]"}`}>
      <div className={`h-[3px] bg-[#3b4453] ${side === "left" ? "-ml-[1px] w-[31px]" : "-ml-[4px] w-[32px]"}`} />
      <div className="mt-[4px] flex min-h-0 flex-1 flex-col items-center bg-[#3b4453] pt-[4px]">
        <div className="grid grid-cols-5 gap-[1px]">
          {[0, 1, 2, 3, 4, 5, 6, 7, 8, 9].map((i) => (
            <div key={i} className="h-px w-px bg-[#c5c9ce]" />
          ))}
        </div>
        <div className="mb-[10px] flex flex-1 rotate-180 justify-center text-[14px] tracking-[0.1px] whitespace-nowrap text-[#d3d6db] [writing-mode:vertical-rl]">
          {label}
        </div>
      </div>
      <div className={`mt-[3px] h-[3px] bg-[#3b4453] ${side === "left" ? "-ml-[1px] w-[31px]" : "-ml-[4px] w-[32px]"}`} />
    </div>
  );
}

export default function App() {
  return (
    <div className="h-[1018px] w-[1910px] overflow-hidden border-l-2 border-[#1b7fa8] bg-[#222933] [font-family:'Open_Sans',sans-serif]">
      <div className="h-[2px]" />
      <div className="h-px bg-[#1b86b2]" />
      <TitleBar />
      <MenuTabs />
      <div className="flex h-[124px] pl-[3px]">
        <DrawPanel />
        <ModifyPanel />
        <AnnotationPanel />
        <LayersPanel />
        <BlockPanel />
        <PropertiesPanel />
        <GroupsPanel />
        <UtilitiesPanel />
        <ClipboardPanel />
        <ViewPanel />
      </div>
      <DocTabs />
      <div className="ml-[3px] h-[5px] bg-[#3b4453]" />
      <div className="flex h-[712px]">
        <SidePalette label="Layer Properties Manager" side="left" />
        <Canvas />
        <SidePalette label="Properties" side="right" />
      </div>
      <div className="ml-[3px] h-[5px] bg-[#3b4453]" />
      <LayoutTabs />
      <StatusBar />
    </div>
  );
}
